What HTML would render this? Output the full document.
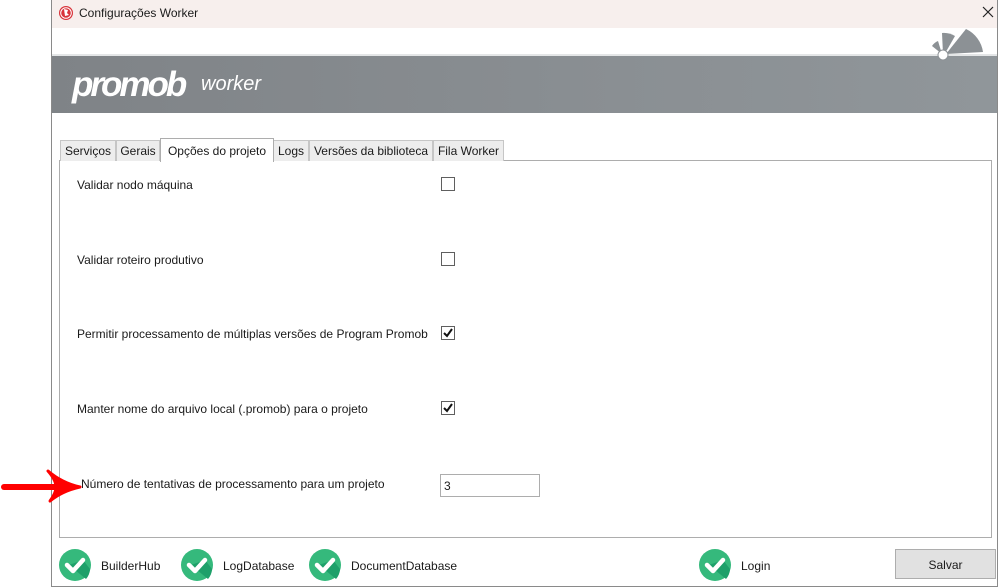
<!DOCTYPE html>
<html><head><meta charset="utf-8">
<style>
*{margin:0;padding:0;box-sizing:border-box}
body{width:1000px;height:587px;background:#fff;position:relative;overflow:hidden;font-family:"Liberation Sans",sans-serif;font-size:12px;color:#1a1a1a}
.a{position:absolute}
.win{left:51px;top:0;width:947px;height:587px;border:1px solid #8a8a8a;border-top:none;background:#fff}
.title{left:52px;top:0;width:945px;height:28px;background:#f7efed}
.banner{left:52px;top:56px;width:945px;height:57px;background:linear-gradient(90deg,#7f8387,#8a8f93 60%,#90969a)}
.tab{top:140px;height:21px;background:#ededed;border:1px solid #c6c6c6;border-bottom:none;font-size:12px;padding-top:3px;text-align:center}
.panel{left:59px;top:160px;width:933px;height:378px;border:1px solid #adadad;background:#fff}
.lbl{left:77px;font-size:12px}
.cb{left:441px;width:14px;height:14px;border:1px solid #5f5f5f;background:#fff}
.ok{width:32px;height:32px;top:549px}
.bl{top:559px;font-size:12px}
</style></head><body>
<div class="a win"></div>
<div class="a title"></div>
<svg class="a" style="left:58px;top:5px" width="16" height="16" viewBox="0 0 16 16"><circle cx="8" cy="8" r="7" fill="#d8333a"/><circle cx="8" cy="8" r="5.3" fill="none" stroke="#fff" stroke-width="1"/><path d="M6 4l4 1-1 3 2 2-4 1z" fill="#fff"/></svg>
<div class="a" style="left:79px;top:6px;font-size:12px">Configurações Worker</div>
<svg class="a" style="left:982px;top:6px" width="12" height="12"><path d="M1 1L11 11M11 1L1 11" stroke="#222" stroke-width="1.2"/></svg>
<div class="a" style="left:52px;top:54px;width:945px;height:2px;background:#e4e6e7"></div>
<div class="a banner"></div>
<div class="a" style="left:72px;top:65px;font-size:35px;font-weight:bold;font-style:italic;color:#fff;letter-spacing:-3px;line-height:40px">promob</div>
<div class="a" style="left:201px;top:72px;font-size:20px;font-style:italic;color:#fff;line-height:24px">worker</div>
<svg class="a" style="left:925px;top:25px" width="60" height="40" viewBox="925 25 60 40">
<path d="M942 54L932 46 A13 13 0 0 1 938 41Z" fill="#8c9195"/>
<path d="M943 54L942 33 A22 22 0 0 1 955 36L947 50Z" fill="#8c9195"/>
<path d="M946 54L966 29 A30 30 0 0 1 983 52Z" fill="#8c9195"/>
<circle cx="943" cy="55" r="5" fill="#fff" stroke="#8c9195" stroke-width="1"/>
</svg>
<div class="a panel"></div>
<div class="a tab" style="left:60px;width:56px">Serviços</div>
<div class="a tab" style="left:116px;width:44px">Gerais</div>
<div class="a tab" style="left:273px;width:36px">Logs</div>
<div class="a tab" style="left:309px;width:124px">Versões da biblioteca</div>
<div class="a tab" style="left:433px;width:71px">Fila Worker</div>
<div class="a" style="left:160px;top:138px;width:114px;height:24px;background:#fff;border:1px solid #adadad;border-bottom:none;padding-top:5px;text-align:center">Opções do projeto</div>
<div class="a lbl" style="top:178px">Validar nodo máquina</div>
<div class="a cb" style="top:177px"></div>
<div class="a lbl" style="top:253px">Validar roteiro produtivo</div>
<div class="a cb" style="top:252px"></div>
<div class="a lbl" style="top:327px">Permitir processamento de múltiplas versões de Program Promob</div>
<div class="a cb" style="top:326px"><svg width="12" height="12" style="position:absolute;left:0;top:0"><path d="M2 6L5 9L10 2" stroke="#111" stroke-width="2" fill="none"/></svg></div>
<div class="a lbl" style="top:402px">Manter nome do arquivo local (.promob) para o projeto</div>
<div class="a cb" style="top:401px"><svg width="12" height="12" style="position:absolute;left:0;top:0"><path d="M2 6L5 9L10 2" stroke="#111" stroke-width="2" fill="none"/></svg></div>
<div class="a" style="left:81px;top:477px">Número de tentativas de processamento para um projeto</div>
<div class="a" style="left:440px;top:474px;width:100px;height:23px;border:1px solid #adadad;padding:4px 0 0 3px">3</div>
<svg class="a" style="left:0;top:465px" width="82" height="40"><path d="M4 22L60 22" stroke="#f00" stroke-width="6" stroke-linecap="round"/><path d="M48 6Q62 18 80 22Q62 26 50 36Q56 28 56 22Q56 15 48 6Z" fill="#f00" stroke="#f00" stroke-width="3" stroke-linejoin="round"/></svg>
<svg width="0" height="0" style="position:absolute"><defs><symbol id="ok" viewBox="0 0 32 32"><circle cx="16" cy="16" r="16" fill="#35b97c"/><path d="M10 16L27 30A16 16 0 0 0 31 20L24 11Z" fill="#1ea06a"/><path d="M8 16L14 22L24 11" stroke="#fff" stroke-width="4.5" fill="none" stroke-linecap="round" stroke-linejoin="round"/></symbol></defs></svg>
<svg class="a ok" style="left:59px"><use href="#ok"/></svg>
<div class="a bl" style="left:101px">BuilderHub</div>
<svg class="a ok" style="left:181px"><use href="#ok"/></svg>
<div class="a bl" style="left:223px">LogDatabase</div>
<svg class="a ok" style="left:309px"><use href="#ok"/></svg>
<div class="a bl" style="left:351px">DocumentDatabase</div>
<svg class="a ok" style="left:699px"><use href="#ok"/></svg>
<div class="a bl" style="left:741px">Login</div>
<div class="a" style="left:895px;top:549px;width:101px;height:30px;background:#e1e1e1;border:1px solid #adadad;text-align:center;padding-top:8px">Salvar</div>
</body></html>
